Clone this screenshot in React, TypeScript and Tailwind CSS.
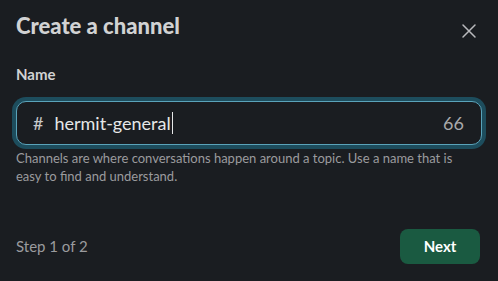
import React from 'react';

const CloseIcon: React.FC = () => (
    <svg width="16" height="16" viewBox="0 0 16 16" fill="none">
        <path d="M2 2L14 14M14 2L2 14" stroke="#b9babd" strokeWidth="1.5" strokeLinecap="round" />
    </svg>
);

export default function App() {
    return (
        <div
            className="w-[498px] h-[281px] bg-[#1a1d21] text-[#d1d2d3] px-4 flex flex-col overflow-hidden"
            style={{ fontFamily: 'Lato, "Noto Sans", sans-serif' }}
        >
            <div className="flex items-start justify-between pt-3">
                <h1 className="text-[22px] leading-[28px] font-black text-[#d1d2d3]">
                    Create a channel
                </h1>
                <button className="mt-[11px] mr-[5px]">
                    <CloseIcon />
                </button>
            </div>

            <label className="mt-[23px] text-[15px] leading-[22px] font-bold text-[#d1d2d3]">
                Name
            </label>

            <div className="mt-4 h-[44px] w-full flex items-center rounded-[10px] border border-[#5aa3ba] shadow-[0_0_0_4px_#1d4d5d] bg-[#1a1d21] px-4">
                <span className="text-[18px] text-[#c8c9cb] mr-[11px]">#</span>
                <span className="text-[18px] text-[#e6e7e8]">hermit-general</span>
                <span className="w-px h-[22px] bg-[#e6e7e8] ml-px" />
                <span className="ml-auto text-[18px] text-[#a8a9ab] pr-[1px]">66</span>
            </div>

            <p className="mt-1 pr-6 text-[13px] leading-[18px] text-[#9a9b9e]">
                Channels are where conversations happen around a topic. Use a name that is easy to find and understand.
            </p>

            <div className="mt-[44px] flex items-center justify-between">
                <span className="text-[15px] text-[#9a9b9e]">Step 1 of 2</span>
                <button className="w-[80px] h-[35px] rounded-lg bg-[#1a5a41] text-white text-[15px] font-bold mr-[2px]">
                    Next
                </button>
            </div>
        </div>
    );
}
